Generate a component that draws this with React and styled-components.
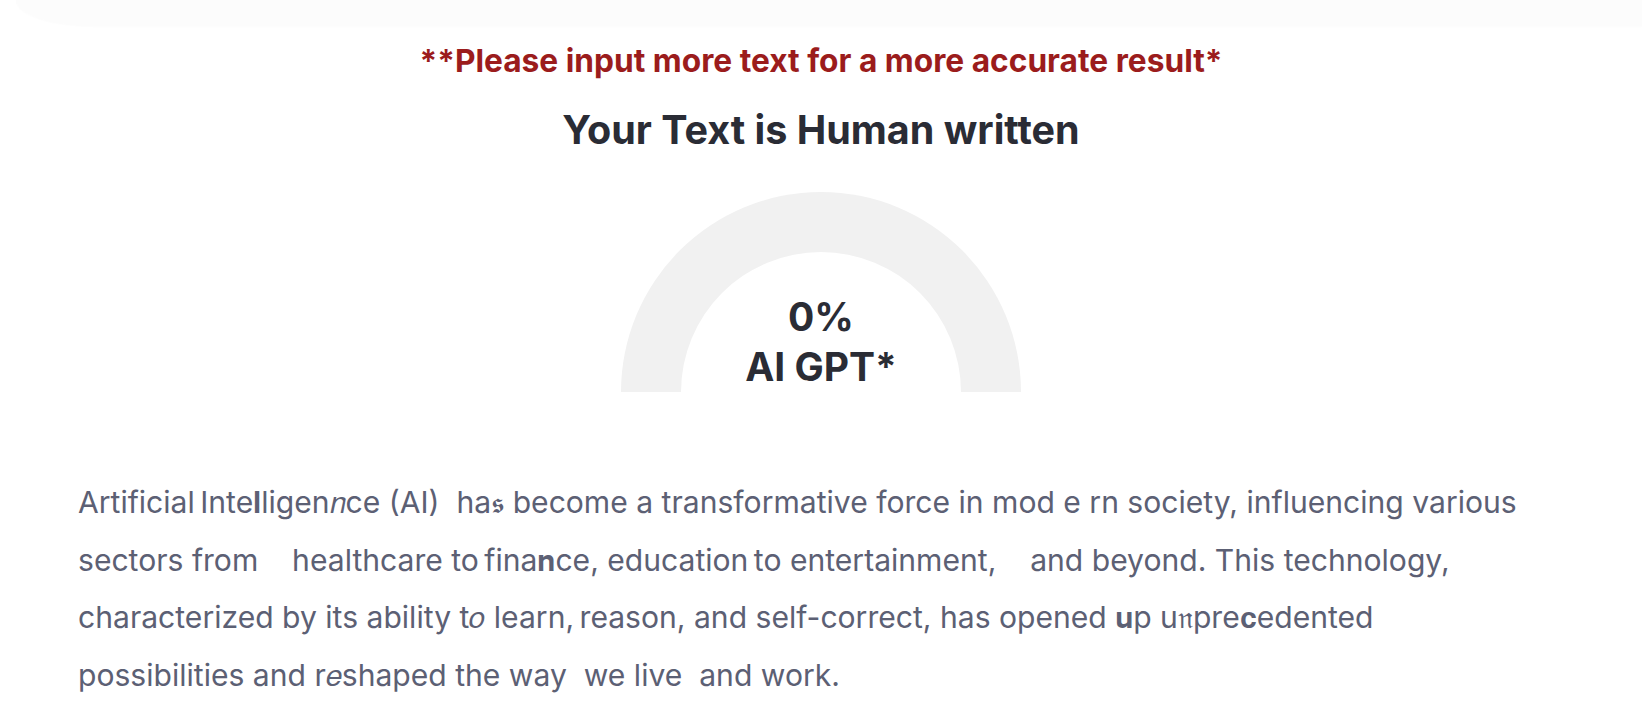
import React from "react";
import styled, { createGlobalStyle } from "styled-components";

const GlobalStyle = createGlobalStyle`
  html, body {
    margin: 0;
    padding: 0;
    background: #ffffff;
  }
  body {
    font-family: Inter, "Noto Sans", "DejaVu Sans", sans-serif;
  }
`;

const Page = styled.div`
  width: 1642px;
  min-height: 710px;
  display: flex;
  flex-direction: column;
  align-items: center;
`;

const TopShade = styled.div`
  align-self: stretch;
  height: 26px;
  margin-left: 16px;
  background: #fcfcfc;
  border-bottom-left-radius: 80px 26px;
  box-shadow: 0 1px 2px rgba(0, 0, 0, 0.015);
`;

const Warning = styled.p`
  margin: 18px 0 0;
  font-size: 31.7px;
  line-height: 34px;
  font-weight: 700;
  color: #9b1c1c;
  text-align: center;
`;

const Verdict = styled.h2`
  margin: 28px 0 0;
  font-size: 39.5px;
  line-height: 48px;
  font-weight: 700;
  color: #2a2c35;
  text-align: center;
`;

const Gauge = styled.div`
  margin-top: 38px;
  width: 400px;
  height: 200px;
  border-radius: 200px 200px 0 0;
  background: #f1f1f1;
  display: flex;
  justify-content: center;
  align-items: flex-end;
`;

const GaugeHole = styled.div`
  width: 280px;
  height: 140px;
  border-radius: 140px 140px 0 0;
  background: #ffffff;
  display: flex;
  flex-direction: column;
  justify-content: flex-end;
  align-items: center;
`;

const GaugeValue = styled.div`
  font-size: 39px;
  line-height: 50px;
  font-weight: 700;
  color: #2a2c35;
  text-align: center;
`;

const Body = styled.p`
  align-self: flex-start;
  width: 1455px;
  margin: 82px 0 0 78px;
  font-size: 30.1px;
  line-height: 57.6px;
  font-weight: 400;
  color: #5c6074;
  white-space: pre-wrap;
`;

const sample =
  "Artificial\u2009Inte\u{1D425}ligen\u{1D45B}ce (AI)  ha\u{1D598} become a transformative force in mod e rn society, influencing various sectors from    healthcare to\u2009fina\u{1D427}ce, education\u2009to entertainment,    and beyond. This technology, characterized by its ability t\u{1D45C} learn,\u2009reason, and self-correct, has opened \u{1D42E}p u\u{1D52B}pre\u{1D41C}edented possibilities and r\u{1D452}shaped the way  we live  and work.";

export default function App() {
  return (
    <>
      <GlobalStyle />
      <Page>
        <TopShade />
        <Warning>**Please input more text for a more accurate result*</Warning>
        <Verdict>Your Text is Human written</Verdict>
        <Gauge>
          <GaugeHole>
            <GaugeValue>0%</GaugeValue>
            <GaugeValue>AI GPT*</GaugeValue>
          </GaugeHole>
        </Gauge>
        <Body>{sample}</Body>
      </Page>
    </>
  );
}
